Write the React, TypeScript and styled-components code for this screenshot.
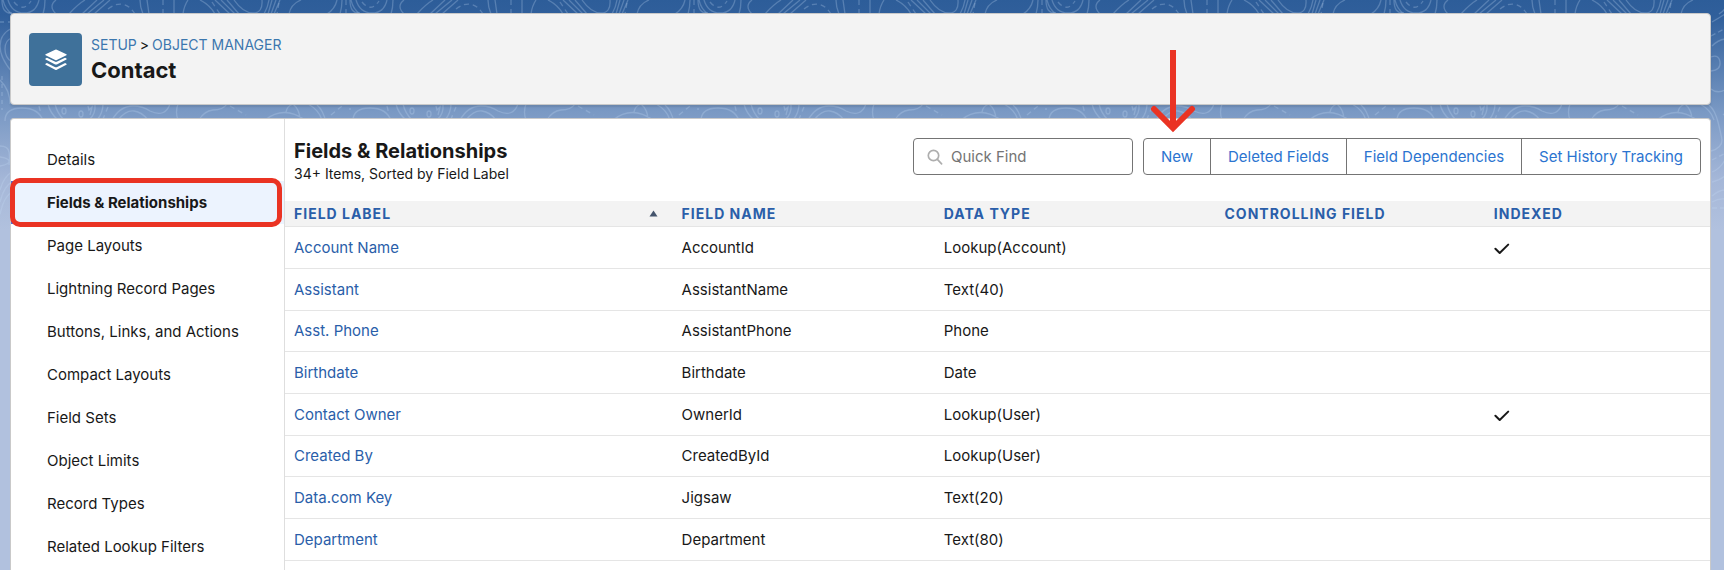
import React from "react";
import styled, { createGlobalStyle } from "styled-components";

const GlobalStyle = createGlobalStyle`
  *, *::before, *::after { box-sizing: border-box; }
  body {
    margin: 0;
    background: #b1c1de;
    color: #181818;
    font: 15px/20px Inter, "Liberation Sans", sans-serif;
  }
  a { color: inherit; text-decoration: none; }
`;

const Page = styled.div`
  position: relative;
  min-height: 100vh;
  display: flex;
  flex-direction: column;
  gap: 13px;
  padding: 13px 13px 0 10px;
  background: linear-gradient(
    to bottom,
    #2d5d99 0,
    #305f9b 16px,
    #7a99c4 112px,
    #a5b7d8 180px,
    #b1c1de 230px
  );
`;

const Backdrop = styled.svg`
  position: absolute;
  inset: 0;
  width: 100%;
  height: 230px;
`;

const Header = styled.header`
  position: relative;
  display: flex;
  align-items: flex-start;
  gap: 9px;
  min-height: 92px;
  padding: 19px 18px 18px;
  background: #f3f3f3;
  border: 1px solid #c9c9c9;
  border-radius: 4px;
  box-shadow: 0 2px 2px rgba(0, 0, 0, 0.1);
`;

const ObjectTile = styled.span`
  display: flex;
  align-items: center;
  justify-content: center;
  width: 53px;
  height: 53px;
  border-radius: 4px;
  background: #3f719a;
`;

const Crumbs = styled.nav`
  display: flex;
  gap: 3px;
  margin-top: 2px;
  font-size: 14px;
  line-height: 20px;

  a { color: #3c77ae; }
`;

const PageTitle = styled.h1`
  margin: 0;
  font-size: 22px;
  line-height: 30px;
  font-weight: 700;
`;

const Workspace = styled.div`
  position: relative;
  flex: 1;
  display: flex;
  background: #fff;
  border: 1px solid #c9c9c9;
  border-bottom: 0;
  border-radius: 4px 4px 0 0;
`;

const Sidebar = styled.nav`
  flex: none;
  width: 274px;
  padding-top: 19px;
  border-right: 1px solid #dedede;
`;

const SideLink = styled.a<{ $active?: boolean }>`
  position: relative;
  display: flex;
  align-items: center;
  height: 43px;
  padding-left: 32px;
  border-left: 4px solid ${(p) => (p.$active ? "#4a6fdc" : "transparent")};
  background: ${(p) => (p.$active ? "#ecf3fe" : "transparent")};
  font-weight: ${(p) => (p.$active ? 700 : 400)};
`;

const Highlight = styled.span`
  position: absolute;
  inset: -3px 2px -3px -5px;
  border: 5px solid #ea3323;
  border-radius: 10px;
  pointer-events: none;
`;

const Main = styled.main`
  flex: 1;
  min-width: 0;
`;

const Toolbar = styled.div`
  display: flex;
  align-items: flex-start;
  gap: 10px;
  height: 82px;
  padding: 19px 9px 0;
`;

const Heading = styled.div`
  flex: 1;
`;

const ListTitle = styled.h2`
  margin: 0;
  font-size: 20px;
  line-height: 26px;
  font-weight: 700;
`;

const ListMeta = styled.p`
  margin: 0;
  font-size: 14px;
  line-height: 20px;
`;

const Search = styled.label`
  display: flex;
  align-items: center;
  gap: 8px;
  width: 220px;
  height: 37px;
  padding: 0 13px;
  border: 1px solid #747474;
  border-radius: 4px;
  background: #fff;
`;

const SearchInput = styled.input`
  flex: 1;
  min-width: 0;
  padding: 0;
  border: 0;
  outline: 0;
  background: transparent;
  font: inherit;
  color: inherit;

  &::placeholder { color: #747474; opacity: 1; }
`;

const ButtonGroup = styled.div`
  position: relative;
  display: flex;
  height: 37px;
  border: 1px solid #747474;
  border-radius: 4px;
`;

const GroupButton = styled.button`
  padding: 0 17px;
  border: 0;
  border-left: 1px solid #747474;
  background: transparent;
  color: #2b74d0;
  font: inherit;
  white-space: nowrap;

  &:first-of-type { border-left: 0; }
`;

const Pointer = styled.svg`
  position: absolute;
  left: 6px;
  bottom: 41px;
  pointer-events: none;
`;

const Table = styled.table`
  width: 100%;
  table-layout: fixed;
  border-collapse: separate;
  border-spacing: 0;
`;

const HeadCell = styled.th<{ $width?: string }>`
  width: ${(p) => p.$width ?? "auto"};
  height: 26px;
  padding: 0 9px;
  background: #f3f3f3;
  border-bottom: 1px solid #e5e5e5;
  color: #2a5ea9;
  font-size: 14px;
  line-height: 20px;
  font-weight: 700;
  letter-spacing: 1px;
  text-align: left;
  text-transform: uppercase;
`;

const SortRow = styled.span`
  display: flex;
  align-items: center;
  justify-content: space-between;
  padding-right: 6px;
`;

const Row = styled.tr`
  height: 42px;

  &:nth-child(3n) { height: 41px; }
`;

const Cell = styled.td`
  padding: 0 9px;
  border-bottom: 1px solid #e5e5e5;

  a { color: #2a5ea9; }
  svg { display: block; }
`;

const sections = [
  "Details",
  "Fields & Relationships",
  "Page Layouts",
  "Lightning Record Pages",
  "Buttons, Links, and Actions",
  "Compact Layouts",
  "Field Sets",
  "Object Limits",
  "Record Types",
  "Related Lookup Filters",
];

const fields = [
  { label: "Account Name", name: "AccountId", type: "Lookup(Account)", indexed: true },
  { label: "Assistant", name: "AssistantName", type: "Text(40)" },
  { label: "Asst. Phone", name: "AssistantPhone", type: "Phone" },
  { label: "Birthdate", name: "Birthdate", type: "Date" },
  { label: "Contact Owner", name: "OwnerId", type: "Lookup(User)", indexed: true },
  { label: "Created By", name: "CreatedById", type: "Lookup(User)" },
  { label: "Data.com Key", name: "Jigsaw", type: "Text(20)" },
  { label: "Department", name: "Department", type: "Text(80)" },
];

const actions = ["New", "Deleted Fields", "Field Dependencies", "Set History Tracking"];

const Contours = () => (
  <Backdrop aria-hidden="true">
    <defs>
      <pattern id="contours" width="348" height="230" patternUnits="userSpaceOnUse">
        <g fill="none" stroke="#c6dcf5" strokeOpacity="0.27" strokeWidth="1.3">
          <path d="M327 14Q335 9 337 0M342 0Q342 7 340 14M3 0Q5 9 12 14M8 0Q12 13 24 13T39 0M45 0Q45 8 43 14M56 0Q48 6 56 14" />
          <path d="M85 0Q78 4 69 14M97 0L82 14M104 0L87 14M110 0L94 14" />
          <path d="M140 0Q140 7 143 14M147 0L149 14M174 0V14M188 0Q184 6 183 14M200 0Q210 5 215 14M215 0L230 14M221 0L235 14M227 0L239 14" />
          <path d="M234 0Q243 13 253 13T262 0M269 0Q268 7 264 14M272 0L268 14M276 0L271 14M280 0L274 14M301 0Q291 4 289 14" />
          <path strokeDasharray="5 4" d="M346 0V14M14 2Q23 13 31 1M108 9Q124 -3 135 14M163 0V14M212 2L220 14M279 3L277 14M39 106L41 114M230 106L246 115M331 115L342 106M108 107L103 119" />
          <path d="M5 121Q5 108 22 108T43 121M48 104Q50 113 58 120M55 104Q57 113 64 120M95 104Q96 114 89 120M103 104Q103 113 97 120M88 106L89 110L92 107L90 115" />
          <ellipse cx="64" cy="111" rx="2" ry="3" />
          <ellipse cx="81" cy="114" rx="2" ry="3" />
          <path d="M112 120Q120 106 133 106Q143 106 150 111Q165 118 170 104M118 120Q126 110 134 111T148 120M178 104Q175 112 178 120" />
          <path d="M199 120Q204 111 213 110Q223 110 227 104M265 120Q284 105 305 120M286 112Q287 106 293 104Q300 110 300 120M308 104Q319 110 322 120" />
          <path d="M2 0Q2 14 12 13M12 28Q0 34 0 46T12 72M12 38Q5 40 5 49T12 62M0 80Q10 90 10 104" />
          <path strokeDasharray="4 4" d="M0 22H10M2 76V110" />
          <path d="M0 146Q8 146 9 152T9 165M0 157Q8 158 9 161T0 166M0 190Q4 176 12 172M0 202Q4 186 12 182M0 214Q4 196 12 192" />
          <path d="M320 22Q327 18 333 14M320 46Q326 40 333 39M319 57Q327 54 328 62T319 71M319 89Q325 94 333 90M317 105Q323 110 326 122T330 140Q330 148 319 151" />
          <path strokeDasharray="5 3" d="M319 36L332 29M320 160L332 154M320 208H333" />
          <path d="M320 172Q328 169 333 160M320 182Q328 180 333 176M320 196Q327 190 333 190M320 202Q327 198 333 199" />
        </g>
      </pattern>
    </defs>
    <rect width="100%" height="230" fill="url(#contours)" />
  </Backdrop>
);

const LayersIcon = () => (
  <svg width="24" height="24" viewBox="0 0 24 24" aria-hidden="true">
    <path
      fill="#fff"
      d="M11.2 1.7q.8-.4 1.6 0l9.6 4.6q.7.5 0 1L12.8 12q-.8.4-1.6 0L1.6 7.3q-.7-.5 0-1z"
    />
    <path
      fill="#fff"
      d="M1.6 11.4q-.7-.5 0-1l1.3-.6 7.9 3.8q1.2.6 2.4 0l7.9-3.8 1.3.6q.7.5 0 1l-9.6 5q-.8.4-1.6 0zM1.6 16.7q-.7-.5 0-1l1.3-.6 7.9 3.9q1.2.6 2.4 0l7.9-3.9 1.3.6q.7.5 0 1l-9.6 5.1q-.8.4-1.6 0z"
    />
  </svg>
);

const SearchIcon = () => (
  <svg width="16" height="16" viewBox="0 0 16 16" aria-hidden="true">
    <g fill="none" stroke="#aeaeae" strokeWidth="1.7" strokeLinecap="round">
      <circle cx="6.5" cy="6.5" r="5.2" />
      <path d="M10.4 10.4L14.6 14.8" />
    </g>
  </svg>
);

const CheckIcon = () => (
  <svg width="16" height="16" viewBox="0 0 16 16" role="img" aria-label="Indexed">
    <path
      d="M1.4 8.8L5.7 13L14.2 4.6"
      fill="none"
      stroke="#181818"
      strokeWidth="2"
      strokeLinecap="round"
      strokeLinejoin="round"
    />
  </svg>
);

export default function App() {
  return (
    <>
      <GlobalStyle />
      <Page>
        <Contours />
        <Header>
          <ObjectTile>
            <LayersIcon />
          </ObjectTile>
          <div>
            <Crumbs aria-label="Breadcrumb">
              <a href="#setup">SETUP</a>
              <span>&gt;</span>
              <a href="#object-manager">OBJECT MANAGER</a>
            </Crumbs>
            <PageTitle>Contact</PageTitle>
          </div>
        </Header>

        <Workspace>
          <Sidebar aria-label="Object sections">
            {sections.map((section, i) => (
              <SideLink key={section} href="#section" $active={i === 1}>
                {section}
                {i === 1 && <Highlight />}
              </SideLink>
            ))}
          </Sidebar>

          <Main>
            <Toolbar>
              <Heading>
                <ListTitle>Fields &amp; Relationships</ListTitle>
                <ListMeta>34+ Items, Sorted by Field Label</ListMeta>
              </Heading>
              <Search>
                <SearchIcon />
                <SearchInput type="text" placeholder="Quick Find" aria-label="Quick Find" />
              </Search>
              <ButtonGroup>
                {actions.map((action) => (
                  <GroupButton key={action} type="button">
                    {action}
                  </GroupButton>
                ))}
                <Pointer width="46" height="84" viewBox="0 0 46 84" aria-hidden="true">
                  <g fill="none" stroke="#ea3323" strokeWidth="6">
                    <path d="M23 1V78" />
                    <path d="M4 60L23 79L42 60" strokeLinecap="round" />
                  </g>
                </Pointer>
              </ButtonGroup>
            </Toolbar>

            <Table>
              <thead>
                <tr>
                  <HeadCell $width="27.2%" aria-sort="ascending">
                    <SortRow>
                      Field Label
                      <svg width="9" height="7" viewBox="0 0 9 7" aria-hidden="true">
                        <path d="M4.5 0.5L8.5 6.5H0.5z" fill="#44546c" />
                      </svg>
                    </SortRow>
                  </HeadCell>
                  <HeadCell $width="18.4%">Field Name</HeadCell>
                  <HeadCell $width="19.7%">Data Type</HeadCell>
                  <HeadCell $width="18.9%">Controlling Field</HeadCell>
                  <HeadCell>Indexed</HeadCell>
                </tr>
              </thead>
              <tbody>
                {fields.map((field) => (
                  <Row key={field.name}>
                    <Cell>
                      <a href="#field">{field.label}</a>
                    </Cell>
                    <Cell>{field.name}</Cell>
                    <Cell>{field.type}</Cell>
                    <Cell />
                    <Cell>{field.indexed && <CheckIcon />}</Cell>
                  </Row>
                ))}
              </tbody>
            </Table>
          </Main>
        </Workspace>
      </Page>
    </>
  );
}
